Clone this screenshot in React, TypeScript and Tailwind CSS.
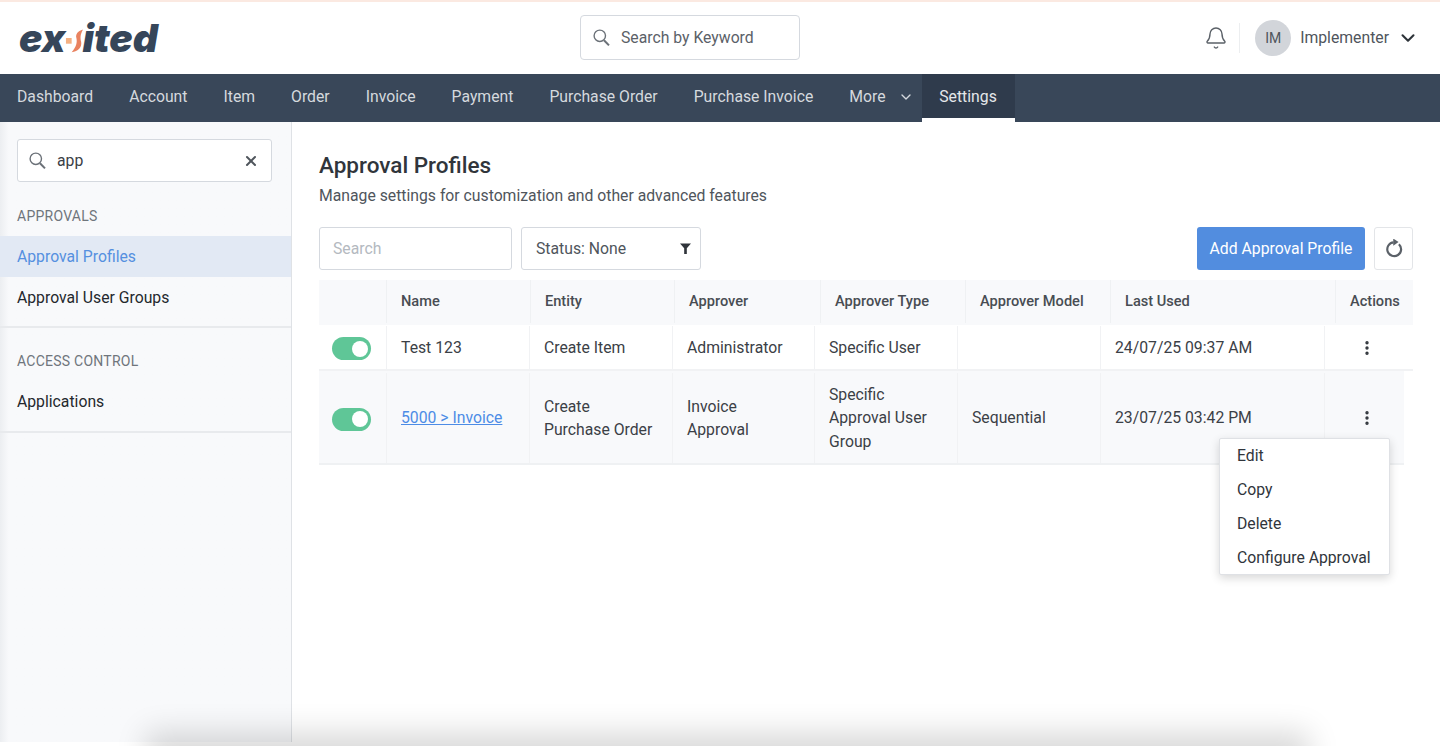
import { Bell, ChevronDown, EllipsisVertical, X } from "lucide-react";

const navItems = ["Dashboard", "Account", "Item", "Order", "Invoice", "Payment", "Purchase Order", "Purchase Invoice"];
const headers = ["", "Name", "Entity", "Approver", "Approver Type", "Approver Model", "Last Used"];

const Toggle = () => (
  <div className="mt-[2px] flex h-[23px] w-[39px] items-center justify-end rounded-full bg-[#5fc697] pr-[3px]">
    <div className="h-[16px] w-[16px] rounded-full bg-white" />
  </div>
);

const Logo = () => (
  <div className="flex h-[32px] items-baseline font-['Inter',sans-serif] text-[39px] leading-[32px] font-black text-[#36465a] italic">
    <span>ex</span>
    <svg width="19" height="32" viewBox="0 0 20 32" className="mx-[-1px] shrink-0 self-center">
      <rect x="1" y="16" width="6" height="6" fill="#f4b183" />
      <path d="M19 7 C13 9 11 12 12 16 C13 21 12 25 7 31 C14 30 18 26 17 20 C16 16 16 12 19 7 Z" fill="#e9825f" />
    </svg>
    <span>ited</span>
  </div>
);

const SearchIcon = () => (
  <svg width="17" height="18" viewBox="0 0 17 18" fill="none" className="shrink-0">
    <circle cx="6.8" cy="6.8" r="5.7" stroke="#6b7178" strokeWidth="1.4" />
    <path d="M11 11.2 L16 16.4" stroke="#6b7178" strokeWidth="2" />
  </svg>
);

const RefreshIcon = () => (
  <svg width="20" height="20" viewBox="0 1.5 22 22" fill="none">
    <path d="M16.4 7.2 A7.6 7.6 0 1 1 10.5 5.2" stroke="#5b6168" strokeWidth="2.4" />
    <path d="M10.2 1 L16 4.9 L10.2 8.8 Z" fill="#5b6168" />
  </svg>
);

export default function App() {
  return (
    <div className="relative flex h-[746px] flex-col overflow-hidden bg-white font-['Roboto',sans-serif] text-[15.75px] text-[#3b4046]">
      <div className="h-[2px] shrink-0 bg-[#fbe9e1]" />

      <header className="flex h-[72px] shrink-0 items-center justify-between pr-[21px] pl-[19px]">
        <div className="w-[561px]">
          <Logo />
        </div>
        <div className="mb-[1px] flex h-[45px] w-[220px] items-center gap-[11px] rounded-[4px] border border-[#d5d9df] pl-[12px] text-[#5b6168]">
          <SearchIcon />
          <span>Search by Keyword</span>
        </div>
        <div className="flex flex-1 items-center justify-end">
          <Bell className="h-[24px] w-[24px] text-[#5b6168]" strokeWidth={1.4} />
          <div className="mr-[15px] ml-[11px] h-[30px] w-px bg-[#eceef0]" />
          <div className="flex h-[36px] w-[36px] items-center justify-center rounded-full bg-[#d2d5da] text-[14px] text-[#4f555c]">
            IM
          </div>
          <span className="ml-[9px] text-[#4f555c]">Implementer</span>
          <ChevronDown className="ml-[8px] h-[22px] w-[22px] text-[#2d3339]" strokeWidth={2.25} />
        </div>
      </header>

      <nav className="flex h-[48px] shrink-0 items-stretch bg-[#394759] pl-[17px] text-[#d5d9de]">
        <div className="flex items-center gap-[36px] pb-[2px]">
          {navItems.map((item) => (
            <span key={item}>{item}</span>
          ))}
          <span className="flex items-center">
            More
            <ChevronDown className="ml-[12px] h-[16px] w-[16px]" strokeWidth={2} />
          </span>
        </div>
        <div className="ml-[8px] flex w-[93px] items-center justify-center border-b-4 border-white bg-[#2f3b4c] pt-[2px] text-[#e4e7ea]">
          Settings
        </div>
      </nav>

      <div className="flex min-h-0 flex-1">
        <aside className="h-[620px] w-[292px] shrink-0 border-r border-[#dfe2e6] bg-[#f8f9fb] bg-gradient-to-r from-[#eceef1] from-0% to-[#f8f9fb] to-[3%]">
          <div className="px-[17px] pt-[17px]">
            <div className="flex h-[43px] w-[255px] items-center rounded-[3px] border border-[#d5d9df] bg-white pr-[12px] pl-[11px]">
              <SearchIcon />
              <span className="ml-[11px] flex-1">app</span>
              <X className="h-[16px] w-[16px] text-[#4f555c]" strokeWidth={3} />
            </div>
          </div>
          <div className="mt-[26px] pl-[17px] text-[14px] leading-[16px] tracking-[0.25px] text-[#6f757c]">APPROVALS</div>
          <div className="mt-[12px] flex h-[41px] items-center bg-[#e2e9f4] pl-[17px] text-[#5590e0]">Approval Profiles</div>
          <div className="flex h-[41px] items-center pl-[17px] text-[#24282d]">Approval User Groups</div>
          <div className="mt-[8px] h-[2px] bg-[#e8eaed]" />
          <div className="mt-[25px] pl-[17px] text-[14px] leading-[16px] tracking-[0.25px] text-[#6f757c]">ACCESS CONTROL</div>
          <div className="mt-[12px] flex h-[41px] items-center pl-[17px] text-[#24282d]">Applications</div>
          <div className="mt-[9px] h-[2px] bg-[#e8eaed]" />
        </aside>

        <main className="min-w-0 flex-1 pt-[29px] pr-[27px] pl-[27px]">
          <h1 className="text-[22.5px] leading-[28px] font-medium text-[#30353b]">Approval Profiles</h1>
          <p className="mt-[7px] leading-[19px] text-[#4f555c]">Manage settings for customization and other advanced features</p>

          <div className="mt-[22px] flex h-[43px] items-stretch">
            <div className="flex w-[193px] items-center rounded-[3px] border border-[#d5d9df] pl-[13px] text-[#b4b9c0]">Search</div>
            <div className="ml-[9px] flex w-[180px] items-center justify-between rounded-[3px] border border-[#d5d9df] pr-[9px] pl-[14px] text-[#4f555c]">
              <span>Status: None</span>
              <svg width="11" height="11" viewBox="0 0 10 10">
                <path d="M0 0.5 H10 L6.2 4.8 V10 H3.8 V4.8 Z" fill="#30353b" />
              </svg>
            </div>
            <div className="ml-auto flex w-[168px] items-center justify-center rounded-[3px] bg-[#528ddf] text-white">Add Approval Profile</div>
            <div className="ml-[9px] flex w-[39px] items-center justify-center rounded-[3px] border border-[#e3e5e8]">
              <RefreshIcon />
            </div>
          </div>

          <div className="mt-[10px] w-[1094px]">
            <div className="grid h-[45px] grid-cols-[68px_144px_144px_146px_145px_145px_225px_77px] bg-[#f8f9fb] pb-[2px] text-[14.6px] font-medium text-[#484d53]">
              {headers.map((h, i) => (
                <div key={i} className="flex items-center border-r border-[#eff1f3] pl-[14px]">
                  {h}
                </div>
              ))}
              <div className="flex items-center pl-[14px]">Actions</div>
            </div>

            <div className="grid h-[46px] grid-cols-[68px_143px_143px_142px_143px_143px_224px_78px] border-b-2 border-[#f1f2f4] pt-[1px] text-[#3b4046]">
              <div className="flex items-center border-r border-[#f1f2f4] pl-[13px]">
                <Toggle />
              </div>
              <div className="flex items-center border-r border-[#f1f2f4] pl-[14px]">Test 123</div>
              <div className="flex items-center border-r border-[#f1f2f4] pl-[14px]">Create Item</div>
              <div className="flex items-center border-r border-[#f1f2f4] pl-[14px]">Administrator</div>
              <div className="flex items-center border-r border-[#f1f2f4] pl-[14px]">Specific User</div>
              <div className="flex items-center border-r border-[#f1f2f4] pl-[14px]" />
              <div className="flex items-center border-r border-[#f1f2f4] pl-[14px]">24/07/25 09:37 AM</div>
              <div className="flex items-center justify-center pl-[6px]">
                <EllipsisVertical className="h-[18px] w-[18px] text-[#30353b]" strokeWidth={2.5} />
              </div>
            </div>

            <div className="relative grid h-[94px] w-[1085px] grid-cols-[68px_143px_143px_142px_143px_143px_224px_79px] border-b-2 border-[#eff1f3] bg-[#f8f9fb] pt-[2px] leading-[23.5px] text-[#3b4046]">
              <div className="flex items-center border-r border-[#f1f2f4] pl-[13px]">
                <Toggle />
              </div>
              <div className="flex items-center border-r border-[#f1f2f4] pl-[14px]">
                <a className="text-[#4d8ce6] underline">5000 &gt; Invoice</a>
              </div>
              <div className="flex items-center border-r border-[#f1f2f4] pl-[14px]">Create<br />Purchase Order</div>
              <div className="flex items-center border-r border-[#f1f2f4] pl-[14px]">Invoice<br />Approval</div>
              <div className="flex items-center border-r border-[#f1f2f4] pl-[14px]">Specific<br />Approval User<br />Group</div>
              <div className="flex items-center border-r border-[#f1f2f4] pl-[14px]">Sequential</div>
              <div className="flex items-center border-r border-[#f1f2f4] pl-[14px]">23/07/25 03:42 PM</div>
              <div className="flex items-center justify-center pl-[5px]">
                <EllipsisVertical className="h-[18px] w-[18px] text-[#30353b]" strokeWidth={2.5} />
              </div>

              {/* row action menu */}
              <div className="absolute top-[67px] left-[900px] z-10 flex h-[137px] w-[171px] flex-col justify-center rounded-[2px] border border-[#dfe1e5] bg-white pl-[17px] text-[#30353b] shadow-[0_3px_10px_rgba(0,0,0,0.16)]">
                <div className="flex h-[34px] shrink-0 items-center">Edit</div>
                <div className="flex h-[34px] shrink-0 items-center">Copy</div>
                <div className="flex h-[34px] shrink-0 items-center">Delete</div>
                <div className="flex h-[34px] shrink-0 items-center">Configure Approval</div>
              </div>
            </div>
          </div>
        </main>
      </div>

      {/* window shadow along the bottom edge of the capture */}
      <div className="pointer-events-none absolute right-[145px] bottom-[-20px] left-[160px] h-[20px] shadow-[0_0_30px_14px_rgba(0,0,0,0.15)]" />
    </div>
  );
}
